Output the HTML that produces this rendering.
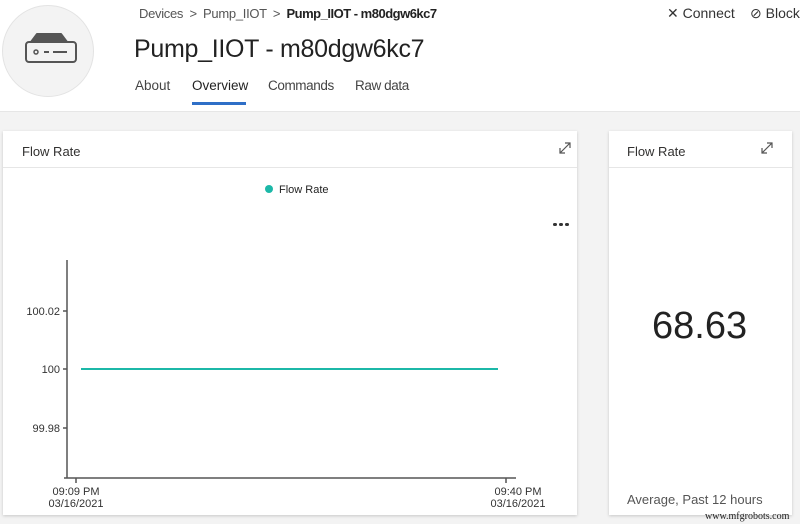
<!DOCTYPE html>
<html><head><style>
body{margin:0;width:800px;height:524px;background:#f3f3f3;font-family:"Liberation Sans",sans-serif;position:relative;overflow:hidden;color:#323130}
.hdr{position:absolute;left:0;top:0;width:800px;height:111px;background:#fff;border-bottom:1px solid #e6e6e6}
.av{position:absolute;left:2px;top:5px;width:90px;height:90px;border-radius:50%;background:#f3f3f3;border:1px solid #e3e3e3}
.t{position:absolute;white-space:nowrap}
.card{position:absolute;background:#fff;box-shadow:0 1px 3px rgba(0,0,0,.18)}
.ch{position:absolute;left:0;right:0;top:0;height:36px;border-bottom:1px solid #e6e6e6}
.small{font-size:11px;color:#222}
.dot{display:inline-block;width:3.5px;height:3.5px;border-radius:50%;background:#333;margin-right:2.5px}
</style></head><body>
<div class="hdr">
<div class="av"><svg width="90" height="90" viewBox="0 0 90 90"><path d="M28 36 L34 28 H58 L64 36" fill="#555" stroke="#555" stroke-width="2" stroke-linejoin="round"/><rect x="23" y="36" width="50" height="20" rx="3" fill="none" stroke="#555" stroke-width="2"/><circle cx="33" cy="46" r="2" fill="none" stroke="#555" stroke-width="1.5"/><path d="M41 46h5M50 46h14" stroke="#555" stroke-width="2"/></svg></div>
<div class="t" style="left:139px;top:6px;font-size:13px;letter-spacing:-0.3px;color:#555">Devices <span style="margin:0 3px">&gt;</span> Pump_IIOT <span style="margin:0 3px">&gt;</span> <b style="color:#222;letter-spacing:-0.5px">Pump_IIOT - m80dgw6kc7</b></div>
<div class="t" style="left:134px;top:35px;font-size:25px;letter-spacing:-0.3px;color:#222">Pump_IIOT - m80dgw6kc7</div>
<div class="t" style="left:135px;top:78px;font-size:13.5px;color:#444">About</div>
<div class="t" style="left:192px;top:78px;font-size:13.5px;color:#222">Overview</div>
<div style="position:absolute;left:192px;top:102px;width:54px;height:3px;background:#2f6fc7"></div>
<div class="t" style="left:268px;top:78px;font-size:13.5px;letter-spacing:-0.4px;color:#444">Commands</div>
<div class="t" style="left:355px;top:78px;font-size:13.5px;letter-spacing:-0.4px;color:#444">Raw data</div>
<div class="t" style="left:667px;top:5px;font-size:14px;color:#333">✕ Connect</div>
<div class="t" style="left:750px;top:5px;font-size:14px;color:#333">⊘ Block</div>
</div>
<div class="card" style="left:3px;top:131px;width:574px;height:384px">
<div class="ch"><div class="t" style="left:19px;top:13px;font-size:13px">Flow Rate</div>
<svg style="position:absolute;left:555px;top:10px" width="14" height="14"><path d="M2 12L12 2M7 2h5v5M2 7v5h5" stroke="#555" stroke-width="1.2" fill="none"/></svg></div>
<div class="t small" style="left:262px;top:53px"><span style="display:inline-block;width:8px;height:8px;border-radius:50%;background:#1cb8a8;margin-right:6px"></span>Flow Rate</div>
<div class="t" style="left:550px;top:89px;line-height:4px"><span class="dot"></span><span class="dot"></span><span class="dot"></span></div>
</div>
<svg style="position:absolute;left:0;top:0" width="580" height="524">
<path d="M67 260V478M64 478H516M63 311h4M63 369h4M63 428h4M76 478v5M506 478v5" stroke="#555" stroke-width="1.5" fill="none"/>
<path d="M81 369H498" stroke="#1cb8a8" stroke-width="2"/>
<g font-family="Liberation Sans" font-size="11" fill="#333" text-anchor="end">
<text x="60" y="315">100.02</text><text x="60" y="373">100</text><text x="60" y="432">99.98</text></g>
<g font-family="Liberation Sans" font-size="11" fill="#333" text-anchor="middle">
<text x="76" y="495">09:09 PM</text><text x="76" y="507">03/16/2021</text>
<text x="518" y="495">09:40 PM</text><text x="518" y="507">03/16/2021</text></g>
</svg>
<div class="card" style="left:609px;top:131px;width:183px;height:384px">
<div class="ch"><div class="t" style="left:18px;top:13px;font-size:13px">Flow Rate</div>
<svg style="position:absolute;left:151px;top:10px" width="14" height="14"><path d="M2 12L12 2M7 2h5v5M2 7v5h5" stroke="#555" stroke-width="1.2" fill="none"/></svg></div>
<div class="t" style="left:43px;top:174px;font-size:38px;color:#222">68.63</div>
<div class="t" style="left:18px;top:361px;font-size:13px;color:#555">Average, Past 12 hours</div>
</div>
<div class="t" style="left:705px;top:511px;font-size:10px;font-family:'Liberation Serif',serif;color:#222">www.mfgrobots.com</div>
</body></html>
